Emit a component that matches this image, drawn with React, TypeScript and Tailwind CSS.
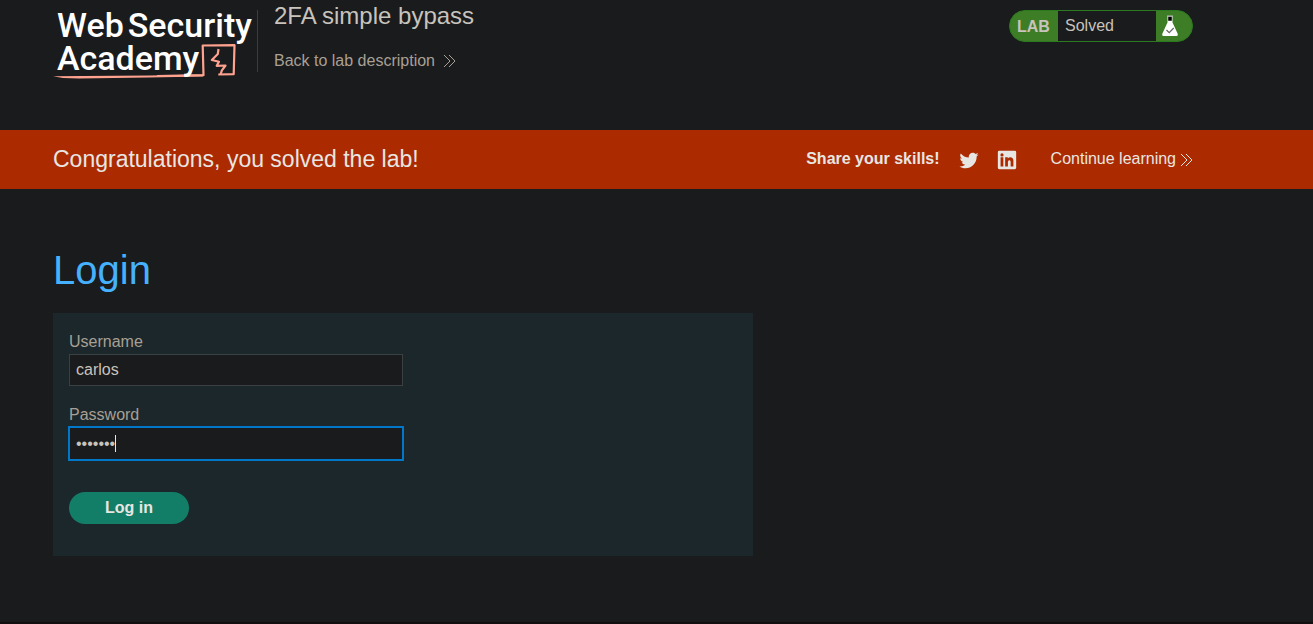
import { useEffect, useRef, useState } from "react";

function Chevrons() {
  return (
    <svg width="13" height="14" viewBox="0 0 13 14" fill="none" stroke="currentColor" strokeWidth="1" aria-hidden="true">
      <path d="M1 1l6 6-6 6M6 1l6 6-6 6" />
    </svg>
  );
}

function Logo() {
  return (
    <a href="#academy" className="relative block h-20 w-[204px] pl-1 pt-[9px] font-['Roboto',sans-serif] text-[34px] font-medium leading-[33px] text-white">
      <svg className="absolute left-0 top-0" width="204" height="80" viewBox="0 0 204 80" fill="none" aria-hidden="true">
        <path d="M0 76.200L30 76l66-.6 54-1v2l-54 1-70 1.200-16-.6z" fill="#ffa28f" />
        <path d="M104 76l46.500-.8-.8-29.700 31.800-.3-.8 29-15.400.3" stroke="#ffa28f" strokeWidth="2.200" strokeLinejoin="round" />
        <path d="M165.500 49l-.7 5-6 6 7.200 1.800-2.300 4 8.800-.3-3.600 4.800-1.400 4.200" stroke="#ffa28f" strokeWidth="2.200" strokeLinejoin="round" />
      </svg>
      <span className="relative flex gap-1 whitespace-nowrap">
        <span>Web</span> <span>Security</span>
      </span>
      <span className="relative block">Academy</span>
    </a>
  );
}

function Flask() {
  return (
    <svg width="18" height="22" viewBox="0 0 18 22" aria-hidden="true">
      <path d="M6.500 1h5v6.500l5.300 11.500q.4 2-1.200 2H2.400Q.8 21 1.200 19L6.500 7.500z" fill="#fff" />
      <path d="M7.200 1.500h3.600v4.300H7.200z" fill="#000" />
      <path d="M6 1h6" stroke="#bbb" />
      <path d="M5.500 15l2.700 2.700 4.500-4.700" fill="none" stroke="#666" strokeWidth="1.200" />
    </svg>
  );
}

export default function App() {
  const password = useRef<HTMLInputElement>(null);
  const [untouched, setUntouched] = useState(true);

  useEffect(() => {
    const field = password.current;
    field?.focus();
    field?.setSelectionRange(field.value.length, field.value.length);
  }, []);

  return (
    <div className="min-h-screen border-b-2 border-[#130f11] bg-[#1a1b1c] font-['Liberation_Sans',Arial,sans-serif] text-base text-[#c8c3bc]">
      <header className="flex h-[130px] items-start pl-[53px] pr-[120px]">
        <Logo />
        <div className="mt-[10px] h-[62px] border-l border-[#383d3f]" />
        <div className="ml-4 flex flex-col gap-[21px]">
          <h2 className="text-2xl leading-8">2FA simple bypass</h2>
          <a href="#lab" className="flex items-center gap-2 leading-4 text-[#a8a095]">
            Back to lab description <Chevrons />
          </a>
        </div>
        <div className="ml-auto mt-[10px] flex h-8 w-[184px] overflow-hidden rounded-full border border-[#2b7a20] bg-[#3d7d26]">
          <span className="flex w-12 items-center pl-[7px] pt-px font-bold">LAB</span>
          <p className="flex flex-1 items-center bg-[#1a1b1c] pl-[7px]">Solved</p>
          <span className="flex w-9 items-center pl-[5px]">
            <Flask />
          </span>
        </div>
      </header>

      <section className="flex h-[59px] items-center bg-[#ab2a00] pl-[53px] pr-[120px] text-[#e8e6e3]">
        <h4 className="text-[23px]">Congratulations, you solved the lab!</h4>
        <div className="ml-auto flex items-center pb-0.5">
          <span className="font-bold">Share your skills!</span>
          <a href="#twitter" aria-label="Twitter" className="ml-[18px] pt-[3px]">
            <svg width="22" height="22" viewBox="0 0 24 24" fill="currentColor" aria-hidden="true">
              <path d="M22.460 6c-.77.350-1.600.580-2.460.690.880-.530 1.560-1.370 1.880-2.380-.830.500-1.750.850-2.720 1.050C18.370 4.500 17.260 4 16 4c-2.350 0-4.270 1.920-4.270 4.290 0 .340.040.670.110.980C8.280 9.090 5.110 7.380 3 4.790c-.370.630-.580 1.370-.580 2.150 0 1.490.750 2.810 1.910 3.560-.710 0-1.370-.2-1.950-.5v.030c0 2.080 1.480 3.820 3.440 4.210a4.220 4.220 0 0 1-1.930.070 4.280 4.280 0 0 0 4 2.980 8.521 8.521 0 0 1-5.330 1.840c-.340 0-.680-.020-1.020-.060C3.440 20.290 5.700 21 8.120 21 16 21 20.330 14.460 20.330 8.790c0-.190 0-.370-.010-.560.840-.600 1.560-1.360 2.140-2.230z" />
            </svg>
          </a>
          <a href="#linkedin" aria-label="LinkedIn" className="ml-4 pt-[3px]">
            <svg width="22" height="22" viewBox="0 0 24 24" fill="currentColor" aria-hidden="true">
              <path d="M20.500 2h-17A1.500 1.500 0 0 0 2 3.500v17A1.500 1.500 0 0 0 3.500 22h17a1.500 1.500 0 0 0 1.500-1.500v-17A1.500 1.500 0 0 0 20.500 2zM8 19H5V9h3zM6.500 8.250A1.750 1.750 0 1 1 8.300 6.500a1.780 1.780 0 0 1-1.800 1.750zM19 19h-3v-4.740c0-1.420-.600-1.930-1.380-1.930A1.740 1.740 0 0 0 13 14.190V19h-3V9h2.900v1.300a3.110 3.110 0 0 1 2.700-1.400c1.550 0 3.360.860 3.360 3.660z" />
            </svg>
          </a>
          <a href="#next" className="ml-[33px] flex items-center gap-1">
            Continue learning
            <span className="pt-[3px]">
              <Chevrons />
            </span>
          </a>
        </div>
      </section>

      <main className="px-[53px] pb-16 pt-[55px]">
        <h1 className="text-[40px] leading-[52px] text-[#45b1ff]">Login</h1>
        <form className="mt-[17px] max-w-[700px] bg-[#1c272b] px-4 pb-8 pt-[21px]" onSubmit={(e) => e.preventDefault()}>
          <div className="flex max-w-[334px] flex-col">
            <label htmlFor="username" className="mb-1 leading-4 text-[#a8a095]">Username</label>
            <input
              id="username"
              type="text"
              defaultValue="carlos"
              className="h-8 border border-[#3b4043] bg-[#1a1b1c] px-[6px] outline-none"
            />
            <label htmlFor="password" className="mb-1 mt-[21px] leading-4 text-[#a8a095]">Password</label>
            <div className="relative flex">
              <input
                id="password"
                ref={password}
                type="password"
                defaultValue="montoya"
                onKeyDown={() => setUntouched(false)}
                onBlur={() => setUntouched(false)}
                onPointerDown={() => setUntouched(false)}
                className={
                  "h-[33px] flex-1 border border-[#3b4043] bg-[#1a1b1c] px-[6px] outline-none focus:border-[#0077c8] focus:ring-1 focus:ring-[#0077c8] " +
                  (untouched ? "caret-transparent" : "caret-white")
                }
              />
              {untouched && <span className="pointer-events-none absolute left-[46px] top-2 h-[17px] w-px bg-[#e8e6e3]" />}
            </div>
          </div>
          <button type="submit" className="mt-8 block h-8 w-[120px] rounded-full bg-[#127e67] font-bold text-[#e8e6e3]">
            Log in
          </button>
        </form>
      </main>
    </div>
  );
}
